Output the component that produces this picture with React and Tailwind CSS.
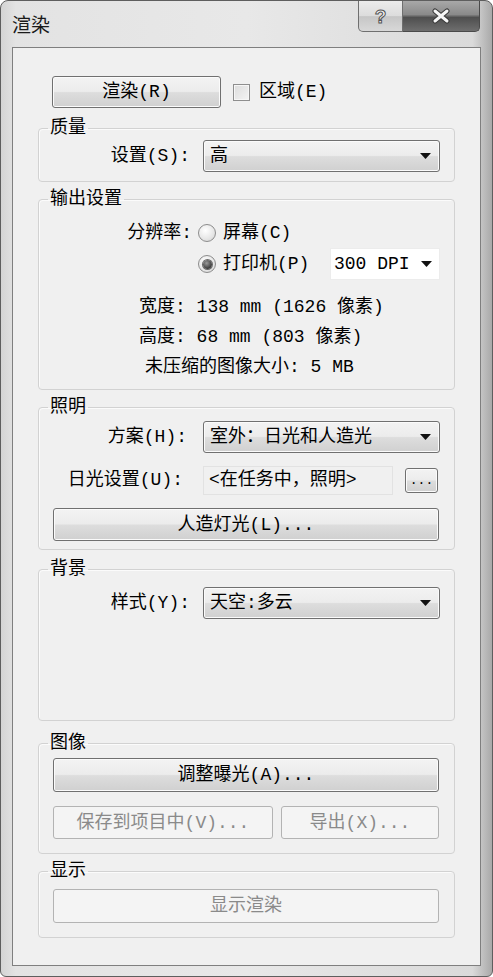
import React from 'react';
import clsx from 'clsx';

const BTN_FACE =
  'border-[#707070] bg-[linear-gradient(#f3f3f3,#ececec_48%,#dddddd_52%,#d0d0d0)] shadow-[inset_0_0_0_1px_#fbfbfb]';

const Button = ({ className, disabled, children }) => (
  <div
    className={clsx(
      'flex items-center justify-center rounded-[3px] border leading-none',
      disabled ? 'border-[#b3b3b3] bg-[#f4f4f4] text-[#8a8a8a]' : clsx(BTN_FACE, 'text-black'),
      className
    )}
  >
    {children}
  </div>
);

const Arrow = () => (
  <svg width="11" height="6" viewBox="0 0 11 6" className="shrink-0">
    <path d="M0 0h11L5.5 6z" fill="#111" />
  </svg>
);

const Combo = ({ className, children }) => (
  <div className={clsx('flex h-[32px] items-center justify-between rounded-[3px] border pl-[6px] pr-[8px]', BTN_FACE, className)}>
    <span className="leading-none">{children}</span>
    <Arrow />
  </div>
);

const Radio = ({ checked }) => (
  <div className="flex h-[18px] w-[18px] items-center justify-center rounded-full border border-[#8c8c8c] bg-[radial-gradient(circle_at_40%_35%,#ffffff,#e6e6e6_60%,#cfcfcf)]">
    {checked && (
      <div className="h-[9px] w-[9px] rounded-full bg-[radial-gradient(circle_at_40%_35%,#9a9a9a,#3a3a3a_70%,#222)] shadow-[0_0_0_1px_#6a6a6a]" />
    )}
  </div>
);

const Group = ({ title, className, children }) => (
  <fieldset className={clsx('rounded-[4px] border border-[#d2d2d2] shadow-[inset_1px_1px_0_#fbfbfb]', className)}>
    <legend className="ml-[9px] px-[2px] text-[18px] leading-[20px]">{title}</legend>
    {children}
  </fieldset>
);

const Row = ({ label, className, labelClass, children }) => (
  <div className={clsx('grid grid-cols-[151px_237px] items-center gap-x-[13px]', className)}>
    <span className={clsx('text-right leading-none', labelClass)}>{label}</span>
    {children}
  </div>
);

export default function App() {
  return (
    <div className="h-[977px] w-[493px] bg-white font-['Liberation_Mono','Noto_Sans_CJK_SC',monospace] text-[18px] text-black">
      <div className="flex h-full flex-col rounded-t-[8px] rounded-b-[6px] border border-[#5e5e5e] bg-[linear-gradient(90deg,#d4d4d4,#e3e3e3_3%,#e8e8e8_50%,#dadada_96%,#a9a9a9)]">
        {/* caption */}
        <div className="flex h-[46px] shrink-0 items-start">
          <span className="ml-[11px] mt-[11px] font-['Noto_Sans_CJK_SC',sans-serif] text-[19px] leading-[24px] text-[#1a1a1a]">渲染</span>
          <div className="ml-auto mr-[12px] flex">
            <div className="flex h-[31px] w-[45px] items-center justify-center rounded-bl-[5px] border border-t-0 border-[#6f6f6f] bg-[linear-gradient(#ececec,#dcdcdc_50%,#c6c6c6_52%,#d8d8d8)]">
              <span className="font-['Liberation_Sans',sans-serif] text-[19px] font-bold leading-none text-[#f4f4f4] [-webkit-text-stroke:1px_#555]">?</span>
            </div>
            <div className="flex h-[31px] w-[77px] items-center justify-center rounded-br-[5px] border border-l-0 border-t-0 border-[#4a4a4a] bg-[linear-gradient(#a8a8a8,#8a8a8a_45%,#4f4f4f_55%,#6e6e6e)]">
              <svg width="20" height="16" viewBox="0 0 20 16">
                <path d="M4 3l12 10M16 3L4 13" stroke="#3a3a3a" strokeWidth="5" strokeLinecap="round" />
                <path d="M4 3l12 10M16 3L4 13" stroke="#f6f6f6" strokeWidth="3" strokeLinecap="round" />
              </svg>
            </div>
          </div>
        </div>

        {/* client area */}
        <div className="mx-[11px] flex-1 border border-[#7f7f7f] bg-[#f0f0f0]">
          <div className="flex items-center pl-[39px] pt-[28px]">
            <Button className="h-[32px] w-[169px]">渲染(R)</Button>
            <div className="ml-[12px] h-[17px] w-[17px] border border-[#8e8e8e] bg-[linear-gradient(135deg,#dcdcdc,#f4f4f4)] shadow-[inset_0_0_0_1px_#f6f6f6]" />
            <span className="ml-[9px] leading-none">区域(E)</span>
          </div>

          <div className="px-[25px]">
            <Group title="质量" className="mt-[10px] pb-[9px] pt-[2px]">
              <Row label="设置(S):">
                <Combo>高</Combo>
              </Row>
            </Group>

            <Group title="输出设置" className="mt-[7px] pb-[7px] pt-[12px]">
              <div className="flex">
                <span className="w-[153px] pt-[3px] text-right leading-none">分辨率:</span>
                <div className="flex flex-1 flex-col pl-[6px] pr-[14px]">
                  <div className="flex h-[24px] items-center gap-[7px]">
                    <Radio />
                    <span className="leading-none">屏幕(C)</span>
                  </div>
                  <div className="mt-[3px] flex h-[32px] items-center">
                    <Radio checked />
                    <span className="ml-[7px] leading-none">打印机(P)</span>
                    <div className="ml-auto flex h-[32px] w-[110px] items-center justify-between border border-[#ececec] bg-white pl-[3px] pr-[7px]">
                      <span className="leading-none">300 DPI</span>
                      <Arrow />
                    </div>
                  </div>
                </div>
              </div>
              <div className="mt-[12px] flex flex-col">
                <span className="h-[30px] pl-[100px] leading-[30px]">宽度: 138 mm (1626 像素)</span>
                <span className="h-[30px] pl-[100px] leading-[30px]">高度: 68 mm (803 像素)</span>
                <span className="h-[30px] pl-[106px] leading-[30px]">未压缩的图像大小: 5 MB</span>
              </div>
            </Group>

            <Group title="照明" className="mt-[7px] pb-[8px] pt-[4px]">
              <Row label="方案(H):" labelClass="pr-[3px]">
                <Combo>室外：日光和人造光</Combo>
              </Row>
              <Row label="日光设置(U):" labelClass="pr-[7px]" className="mt-[11px] h-[32px]">
                <div className="flex items-center">
                  <div className="flex h-[29px] w-[190px] items-center border border-[#e2e2e2] bg-[#f0f0f0] pl-[5px] leading-none">
                    &lt;在任务中，照明&gt;
                  </div>
                  <Button className="ml-[12px] h-[25px] w-[33px] items-end pb-[5px] text-[13px]">...</Button>
                </div>
              </Row>
              <div className="mt-[12px] pl-[14px] pr-[15px]">
                <Button className="h-[33px] w-full">人造灯光(L)...</Button>
              </div>
            </Group>

            <Group title="背景" className="mt-[9px] pb-[101px] pt-[8px]">
              <Row label="样式(Y):">
                <Combo>天空:多云</Combo>
              </Row>
            </Group>

            <Group title="图像" className="mt-[12px] pb-[14px] pt-[5px]">
              <div className="pl-[14px] pr-[15px]">
                <Button className="h-[34px] w-full">调整曝光(A)...</Button>
                <div className="mt-[14px] flex gap-[8px]">
                  <Button disabled className="h-[33px] w-[220px]">保存到项目中(V)...</Button>
                  <Button disabled className="h-[33px] flex-1">导出(X)...</Button>
                </div>
              </div>
            </Group>

            <Group title="显示" className="mt-[7px] pb-[14px] pt-[8px]">
              <div className="pl-[14px] pr-[15px]">
                <Button disabled className="h-[34px] w-full">显示渲染</Button>
              </div>
            </Group>
          </div>
        </div>
        <div className="h-[10px] shrink-0" />
      </div>
    </div>
  );
}
